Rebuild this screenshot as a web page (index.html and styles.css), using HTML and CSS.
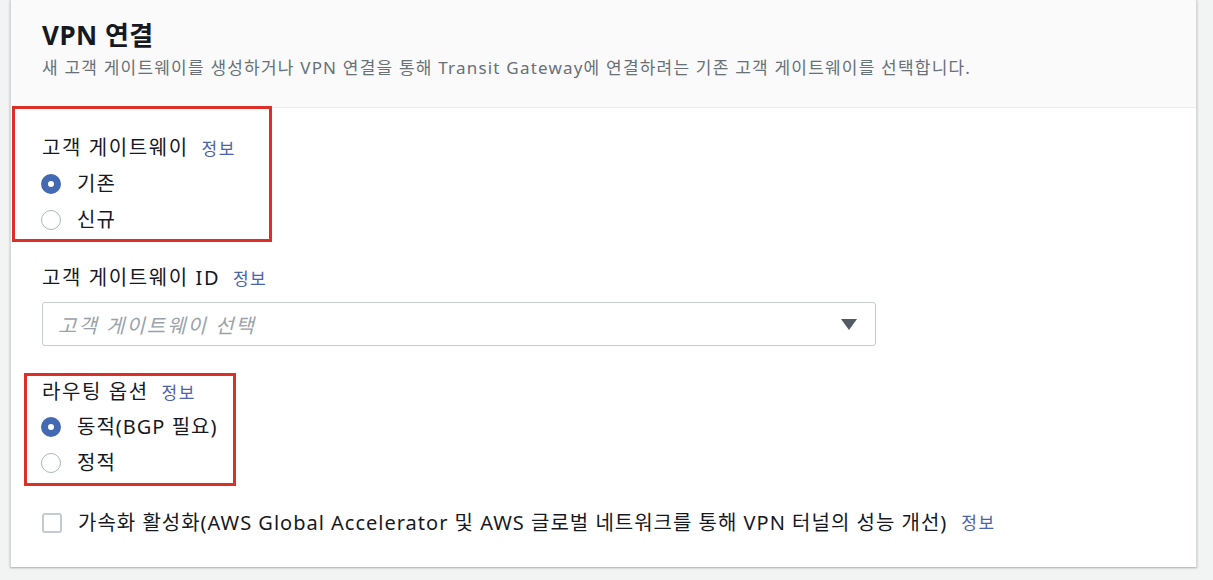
FILE: index.html
```html
<!DOCTYPE html>
<html lang="ko">
<head>
    <meta charset="UTF-8">
    <title>VPN 연결</title>
    <link rel="stylesheet" href="styles.css">
</head>
<body>

    <div class="card">
        <div class="card-header">
            <h2>VPN 연결</h2>
            <p>새 고객 게이트웨이를 생성하거나 VPN 연결을 통해 Transit Gateway에 연결하려는 기존 고객 게이트웨이를 선택합니다.</p>
        </div>

        <div class="card-body">
            <div class="field mark mark-gateway">
                <div class="label">고객 게이트웨이 <a class="info">정보</a></div>
                <div class="option"><span class="radio checked"></span>기존</div>
                <div class="option"><span class="radio"></span>신규</div>
            </div>

            <div class="field field-id">
                <div class="label">고객 게이트웨이 ID <a class="info">정보</a></div>
                <div class="select">
                    <span class="placeholder">고객 게이트웨이 선택</span>
                    <span class="caret"></span>
                </div>
            </div>

            <div class="field mark mark-routing">
                <div class="label">라우팅 옵션 <a class="info">정보</a></div>
                <div class="option"><span class="radio checked"></span>동적(BGP 필요)</div>
                <div class="option"><span class="radio"></span>정적</div>
            </div>

            <div class="option accel">
                <span class="checkbox"></span>가속화 활성화(AWS Global Accelerator 및 AWS 글로벌 네트워크를 통해 VPN 터널의 성능 개선) <a class="info">정보</a>
            </div>
        </div>
    </div>

</body>
</html>
```

FILE: styles.css
```css
body {
    margin: 0;
    background-color: #f2f3f3;
    font-family: 'Noto Sans', 'Noto Sans CJK KR', sans-serif;
    color: #16191f;
    height: 580px;
    overflow: hidden;
}

.card {
    margin-left: 10px;
    width: 1185px;
    background: #fff;
    border-left: 1px solid #d5dbdb;
    border-right: 1px solid #d5dbdb;
    box-shadow: 0 1px 2px rgba(0, 0, 0, 0.3);
}

.card-header {
    background: #fafafa;
    border-bottom: 1px solid #eaeded;
    padding: 18px 31px 0;
    height: 89px;
}

.card-header h2 {
    margin: 0;
    font-size: 26px;
    line-height: 34px;
    font-weight: 700;
    letter-spacing: 0.5px;
}

.card-header p {
    margin: 4px 0 0;
    font-size: 17px;
    line-height: 24px;
    letter-spacing: 1.2px;
    color: #687078;
}

.card-body {
    padding: 0 31px 26px;
}

.label {
    font-size: 20px;
    line-height: 26px;
    letter-spacing: 1.6px;
}

.info {
    color: #4b63ad;
    font-size: 17px;
    letter-spacing: 1.5px;
    margin-left: 6px;
}

.option {
    display: flex;
    align-items: center;
    font-size: 20px;
    line-height: 26px;
    letter-spacing: 1px;
    height: 36px;
}

/* Radio + checkbox */
.radio {
    width: 20px;
    height: 20px;
    border-radius: 50%;
    border: 1px solid #aab7b8;
    box-sizing: border-box;
    margin-right: 16px;
    margin-left: -1px;
}

.radio.checked {
    border: 7px solid #4469b3;
}

.checkbox {
    width: 20px;
    height: 20px;
    border: 2px solid #c4cbd0;
    border-radius: 3px;
    box-sizing: border-box;
    margin-right: 16px;
}

/* Red annotation boxes */
.mark {
    border: 3px solid #dc3027;
}

.mark-gateway {
    margin: -2px 0 0 -30px;
    width: 227px;
    padding: 26px 0 0 27px;
    height: 104px;
}

.mark-gateway .label {
    margin-bottom: 4px;
}

.field-id {
    margin-top: 23px;
}

.field-id .label {
    margin-bottom: 10px;
}

.select {
    width: 834px;
    height: 44px;
    border: 1px solid #c6cbcd;
    border-radius: 3px;
    box-sizing: border-box;
    display: flex;
    align-items: center;
    justify-content: space-between;
    padding: 0 18px 0 15px;
}

.placeholder {
    font-style: italic;
    color: #9aa3ab;
    font-size: 20px;
    letter-spacing: 2px;
}

.caret {
    width: 0;
    height: 0;
    border-left: 8px solid transparent;
    border-right: 8px solid transparent;
    border-top: 11px solid #545b64;
}

.mark-routing {
    margin: 27px 0 0 -18px;
    width: 191px;
    padding: 3px 0 0 15px;
    height: 104px;
}

.mark-routing .label {
    margin-bottom: 3px;
}

.accel {
    margin-top: 19px;
}

.accel .info {
    margin-left: 14px;
}
```
